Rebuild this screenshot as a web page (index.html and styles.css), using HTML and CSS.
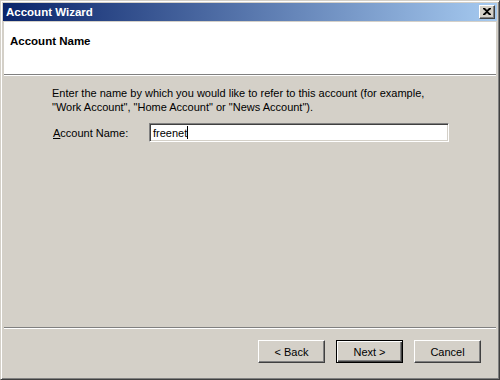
FILE: index.html
```html
<!DOCTYPE html>
<html>
<head>
<meta charset="utf-8">
<link rel="stylesheet" href="styles.css">
</head>
<body>
<div class="window">
  <div class="titlebar">
    <span class="title">Account Wizard</span>
    <span class="close-btn"><svg width="8" height="7" viewBox="0 0 8 7"><path d="M0 0h2l2 2 2-2h2v1L5 3.5 8 6v1H6L4 5 2 7H0V6l3-2.5L0 1z" fill="#000"/></svg></span>
  </div>
  <div class="client">
    <div class="header">
      <div class="header-title">Account Name</div>
    </div>
    <div class="etch"></div>
    <div class="content">
      <p class="desc">Enter the name by which you would like to refer to this account (for example,<br>"Work Account", "Home Account" or "News Account").</p>
      <div class="field-row">
        <label class="field-label"><u>A</u>ccount Name:</label>
        <div class="textbox"><span class="value">freenet</span><span class="caret"></span></div>
      </div>
    </div>
    <div class="etch"></div>
    <div class="footer">
      <button class="btn">&lt; Back</button>
      <button class="btn default">Next &gt;</button>
      <button class="btn cancel">Cancel</button>
    </div>
  </div>
</div>
</body>
</html>
```
FILE: styles.css
```css
html, body {
  margin: 0;
  padding: 0;
  background: #d4d0c8;
}
body {
  width: 500px;
  height: 380px;
  overflow: hidden;
  font-family: "Liberation Sans", Arial, sans-serif;
  font-size: 11px;
  color: #000;
}
.window {
  box-sizing: border-box;
  width: 500px;
  height: 380px;
  background: #d4d0c8;
  border-top: 1px solid #d4d0c8;
  border-left: 1px solid #d4d0c8;
  border-right: 1px solid #404040;
  border-bottom: 1px solid #404040;
  box-shadow: inset 1px 1px 0 #ffffff, inset -1px -1px 0 #808080;
  padding: 2px;
  display: flex;
  flex-direction: column;
}
.titlebar {
  height: 18px;
  flex: none;
  background: linear-gradient(to right, #0a246a, #a6caf0);
  display: flex;
  align-items: center;
  justify-content: space-between;
  padding: 0 2px 0 3px;
}
.title {
  color: #fff;
  font-weight: bold;
  font-size: 11.5px;
}
.close-btn {
  box-sizing: border-box;
  width: 16px;
  height: 14px;
  background: #d4d0c8;
  border-top: 1px solid #ffffff;
  border-left: 1px solid #ffffff;
  border-right: 1px solid #404040;
  border-bottom: 1px solid #404040;
  box-shadow: inset -1px -1px 0 #808080;
  display: flex;
  align-items: center;
  justify-content: center;
  padding: 0 1px 1px 0;
}
.close-btn svg { display: block; }
.client {
  flex: 1;
  display: flex;
  flex-direction: column;
  margin: 1px 1px 0 1px;
}
.header {
  height: 52px;
  background: #fff;
  flex: none;
}
.header-title {
  font-weight: bold;
  font-size: 11.5px;
  padding: 13px 0 0 6px;
}
.etch {
  height: 1px;
  border-top: 1px solid #808080;
  background: #fff;
  flex: none;
}
.content {
  flex: 1;
  padding: 10px 0 0 48px;
}
.desc {
  margin: 0;
  line-height: 14px;
}
.field-row {
  display: flex;
  align-items: center;
  margin-top: 9px;
}
.field-label {
  width: 96px;
  flex: none;
  padding-left: 1px;
}
.textbox {
  box-sizing: border-box;
  width: 300px;
  height: 19px;
  background: #fff;
  border-top: 1px solid #808080;
  border-left: 1px solid #808080;
  border-right: 1px solid #fff;
  border-bottom: 1px solid #fff;
  box-shadow: inset 1px 1px 0 #404040, inset -1px -1px 0 #d4d0c8;
  display: flex;
  align-items: center;
  padding-left: 3px;
}
.caret {
  width: 1px;
  height: 13px;
  background: #000;
}
.footer {
  flex: none;
  height: 48px;
  box-sizing: border-box;
  display: flex;
  justify-content: flex-end;
  align-items: flex-start;
  gap: 11px;
  padding: 11px 15px 0 0;
}
.btn {
  box-sizing: border-box;
  width: 67px;
  height: 23px;
  margin: 0;
  padding: 0;
  font-family: "Liberation Sans", Arial, sans-serif;
  font-size: 11px;
  color: #000;
  background: #d4d0c8;
  border-top: 1px solid #ffffff;
  border-left: 1px solid #ffffff;
  border-right: 1px solid #404040;
  border-bottom: 1px solid #404040;
  box-shadow: inset -1px -1px 0 #808080;
}
.btn.default {
  border: 1px solid #000;
  box-shadow: inset 1px 1px 0 #ffffff, inset -1px -1px 0 #404040, inset -2px -2px 0 #808080;
}
```
